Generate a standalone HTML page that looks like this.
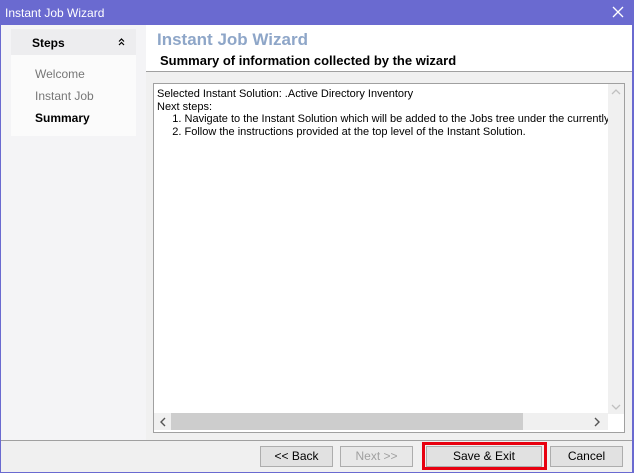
<!DOCTYPE html><html><head><style>
body{margin:0;width:634px;height:473px;overflow:hidden;background:#6a6ad0;font-family:"Liberation Sans",sans-serif;position:relative}
div{position:absolute;box-sizing:border-box}
.t{font-size:12px;color:#fff;left:5px;top:6px}
.btn{top:446px;height:21px;border:1px solid #adadad;background:#e1e1e1;font-size:12px;text-align:center;line-height:19px;color:#000}
</style></head><body>
<div class="t">Instant Job Wizard</div>
<svg style="position:absolute;left:612px;top:6px" width="12" height="12"><path d="M1 1L11 11M11 1L1 11" stroke="#fff" stroke-width="1.3"/></svg>
<div style="left:1px;top:25px;width:631px;height:447px;background:#f0f0f0"></div>
<div style="left:1px;top:25px;width:145px;height:415px;background:#f4f4f6"></div>
<div style="left:11px;top:29px;width:125px;height:26px;background:#ededef"></div>
<div style="left:32px;top:36px;font-size:12px;font-weight:bold">Steps</div>
<svg style="position:absolute;left:118px;top:38px" width="7" height="8"><path d="M1 3.5L3.5 1L6 3.5M1 7L3.5 4.5L6 7" stroke="#000" stroke-width="1.2" fill="none"/></svg>
<div style="left:11px;top:55px;width:125px;height:81px;background:#fbfbfb"></div>
<div style="left:35px;top:67px;font-size:12px;color:#777">Welcome</div>
<div style="left:35px;top:89px;font-size:12px;color:#777">Instant Job</div>
<div style="left:35px;top:111px;font-size:12px;font-weight:bold">Summary</div>
<div style="left:146px;top:25px;width:486px;height:47px;background:#fff;border-bottom:1px solid #a0a0a0"></div>
<div style="left:157px;top:30px;font-size:17px;font-weight:bold;color:#8ea6c8">Instant Job Wizard</div>
<div style="left:160px;top:53px;font-size:13px;font-weight:bold">Summary of information collected by the wizard</div>
<div style="left:153px;top:83px;width:472px;height:350px;background:#fff;border:1px solid #a0a0a0;overflow:hidden">
<div style="left:3px;top:4px;font-size:11px;line-height:12.7px;white-space:pre;color:#000">Selected Instant Solution: .Active Directory Inventory
Next steps:
     1. Navigate to the Instant Solution which will be added to the Jobs tree under the currently
     2. Follow the instructions provided at the top level of the Instant Solution.</div>
<div style="left:454px;top:0;width:17px;height:330px;background:#f0f0f0"></div>
<div style="left:0;top:329px;width:454px;height:17px;background:#f0f0f0"></div>
<div style="left:17px;top:329px;width:352px;height:17px;background:#cdcdcd"></div>
<svg style="position:absolute;left:457px;top:5px" width="10" height="6"><path d="M1 5L5 1L9 5" stroke="#c0c0c0" stroke-width="1.3" fill="none"/></svg>
<svg style="position:absolute;left:457px;top:320px" width="10" height="6"><path d="M1 1L5 5L9 1" stroke="#c0c0c0" stroke-width="1.3" fill="none"/></svg>
<svg style="position:absolute;left:6px;top:333px" width="6" height="10"><path d="M5 1L1 5L5 9" stroke="#555" stroke-width="1.4" fill="none"/></svg>
<svg style="position:absolute;left:440px;top:333px" width="6" height="10"><path d="M1 1L5 5L1 9" stroke="#555" stroke-width="1.4" fill="none"/></svg>
</div>
<div style="left:1px;top:440px;width:631px;height:1px;background:#a0a0a0"></div>
<div class="btn" style="left:260px;width:73px">&lt;&lt; Back</div>
<div class="btn" style="left:340px;width:73px;color:#a0a0a0;background:#e8e8e8">Next &gt;&gt;</div>
<div style="left:422px;top:442px;width:125px;height:28px;border:3px solid #e8000f"></div>
<div class="btn" style="left:426px;width:116px">Save &amp; Exit</div>
<div class="btn" style="left:550px;width:73px">Cancel</div>
</body></html>
